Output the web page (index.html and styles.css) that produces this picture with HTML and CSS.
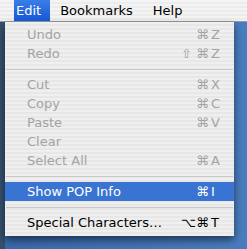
FILE: index.html
```html
<!DOCTYPE html>
<html lang="en">
<head>
    <meta charset="UTF-8">
    <title>Edit Menu</title>
    <link rel="stylesheet" href="styles.css">
</head>
<body>
    <!-- Top menu bar -->
    <div class="menubar">
        <span class="bar-item active">Edit</span>
        <span class="bar-item">Bookmarks</span>
        <span class="bar-item">Help</span>
    </div>

    <div class="desktop">
        <!-- Dropdown for Edit -->
        <div class="menu">
            <div class="item disabled"><span class="label">Undo</span><span class="mods">⌘</span><span class="key">Z</span></div>
            <div class="item disabled"><span class="label">Redo</span><span class="mods">⇧ ⌘</span><span class="key">Z</span></div>
            <div class="separator"></div>
            <div class="item disabled"><span class="label">Cut</span><span class="mods">⌘</span><span class="key">X</span></div>
            <div class="item disabled"><span class="label">Copy</span><span class="mods">⌘</span><span class="key">C</span></div>
            <div class="item disabled"><span class="label">Paste</span><span class="mods">⌘</span><span class="key">V</span></div>
            <div class="item disabled"><span class="label">Clear</span></div>
            <div class="item disabled"><span class="label">Select All</span><span class="mods">⌘</span><span class="key">A</span></div>
            <div class="separator"></div>
            <div class="item selected"><span class="label">Show POP Info</span><span class="mods">⌘</span><span class="key">I</span></div>
            <div class="separator"></div>
            <div class="item"><span class="label">Special Characters…</span><span class="mods">⌥⌘</span><span class="key">T</span></div>
        </div>
    </div>
</body>
</html>
```

FILE: styles.css
```css
/* Reset margin for body */
body {
    margin: 0;
    overflow: hidden;
    width: 247px;
    height: 249px;
    background-color: #4273b5; /* Aqua desktop blue */
    font-family: "DejaVu Sans", "Liberation Sans", sans-serif;
    font-size: 13px;
}

/* Menu bar across the top */
.menubar {
    display: flex;
    height: 21px;
    line-height: 21px;
    background: repeating-linear-gradient(to bottom, #f4f4f4 0, #f4f4f4 2px, #ececec 2px, #ececec 4px);
    border-bottom: 1px solid #9a9a9a;
    color: #000;
}

.bar-item {
    padding: 0 10px;
}

.bar-item.active {
    margin-left: 14px;
    padding: 0 9px 0 2px;
    color: #fff;
    background: linear-gradient(to bottom, #3a7ee6, #1656d6);
}

/* Desktop area under the bar */
.desktop {
    height: 227px;
    padding-left: 5px;
    background: linear-gradient(to right, #35506f 0, #35506f 5px, #3a69ab 5px, #4a7dbf 100%);
}

.menu {
    width: 229px;
    padding: 3px 0 4px;
    background: repeating-linear-gradient(to bottom, #efefef 0, #efefef 2px, #e7e7e7 2px, #e7e7e7 4px);
    box-shadow: 0 4px 8px rgba(0, 0, 0, 0.55);
}

.item {
    display: flex;
    height: 19px;
    line-height: 19px;
    padding: 0 13px 0 22px;
    color: #000;
}

.item.disabled {
    color: #a3a3a3;
}

.item.selected {
    color: #fff;
    background-color: #3a74d3;
}

.label {
    flex: 1;
}

.mods {
    margin-right: 2px;
    text-align: right;
}

.key {
    width: 10px;
}

.separator {
    height: 1px;
    margin: 6px 1px 5px;
    background-color: #c8c8c8;
}
```
